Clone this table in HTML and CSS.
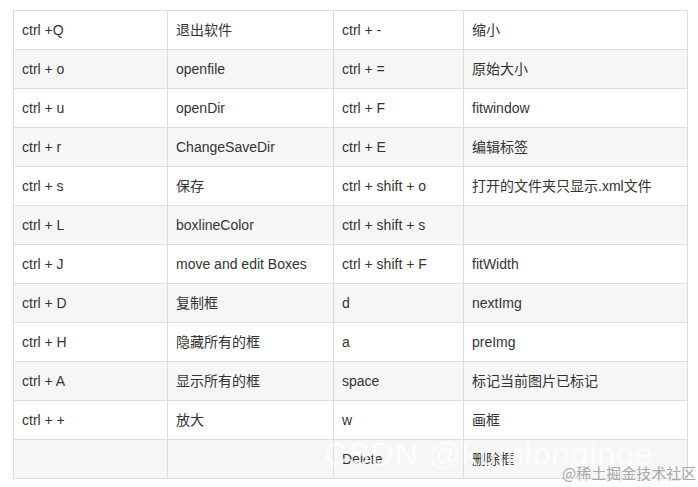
FILE: index.html
```html
<!DOCTYPE html>
<html lang="zh">
<head>
<meta charset="utf-8">
<link rel="stylesheet" href="styles.css">
</head>
<body>
<div class="page">
  <table class="keys">
    <colgroup>
      <col class="c1"><col class="c2"><col class="c3"><col class="c4">
    </colgroup>
    <tbody>
      <tr><td>ctrl +Q</td><td>退出软件</td><td>ctrl + -</td><td>缩小</td></tr>
      <tr><td>ctrl + o</td><td>openfile</td><td>ctrl + =</td><td>原始大小</td></tr>
      <tr><td>ctrl + u</td><td>openDir</td><td>ctrl + F</td><td>fitwindow</td></tr>
      <tr><td>ctrl + r</td><td>ChangeSaveDir</td><td>ctrl + E</td><td>编辑标签</td></tr>
      <tr><td>ctrl + s</td><td>保存</td><td>ctrl + shift + o</td><td>打开的文件夹只显示.xml文件</td></tr>
      <tr><td>ctrl + L</td><td>boxlineColor</td><td>ctrl + shift + s</td><td></td></tr>
      <tr><td>ctrl + J</td><td>move and edit Boxes</td><td>ctrl + shift + F</td><td>fitWidth</td></tr>
      <tr><td>ctrl + D</td><td>复制框</td><td>d</td><td>nextImg</td></tr>
      <tr><td>ctrl + H</td><td>隐藏所有的框</td><td>a</td><td>preImg</td></tr>
      <tr><td>ctrl + A</td><td>显示所有的框</td><td>space</td><td>标记当前图片已标记</td></tr>
      <tr><td>ctrl + +</td><td>放大</td><td>w</td><td>画框</td></tr>
      <tr><td></td><td></td><td>Delete</td><td>删除框</td></tr>
    </tbody>
  </table>
  <div class="wm-csdn">CSDN @kuinlonginge</div>
  <div class="wm-juejin">@稀土掘金技术社区</div>
</div>
</body>
</html>
```

FILE: styles.css
```css
html, body {
  margin: 0;
  padding: 0;
  background: #fff;
}
.page {
  position: relative;
  width: 698px;
  height: 487px;
  padding: 10px 0 0 13px;
  box-sizing: border-box;
  overflow: hidden;
  font-family: "Liberation Sans", Arial, "Noto Sans CJK SC", sans-serif;
  font-size: 14px;
  color: #333;
}
.keys {
  border-collapse: collapse;
  table-layout: fixed;
  width: 674px;
}
.c1 { width: 154px; }
.c2 { width: 166px; }
.c3 { width: 130px; }
.c4 { width: 224px; }
.keys td {
  border: 1px solid #dddddd;
  height: 39px;
  padding: 0 8px;
  box-sizing: border-box;
  vertical-align: middle;
  white-space: nowrap;
  line-height: 20px;
}
.keys tr:nth-child(even) td {
  background: #f6f6f6;
}
.wm-csdn {
  position: absolute;
  left: 324px;
  top: 436px;
  font-family: "Liberation Sans", Arial, sans-serif;
  font-size: 32px;
  color: rgba(255, 255, 255, 0.75);
  letter-spacing: 1px;
  white-space: nowrap;
}
.wm-juejin {
  position: absolute;
  left: 562px;
  top: 464px;
  font-family: "Noto Sans CJK SC", sans-serif;
  font-size: 15px;
  line-height: 18px;
  color: #a8a8a8;
  white-space: nowrap;
}
```
